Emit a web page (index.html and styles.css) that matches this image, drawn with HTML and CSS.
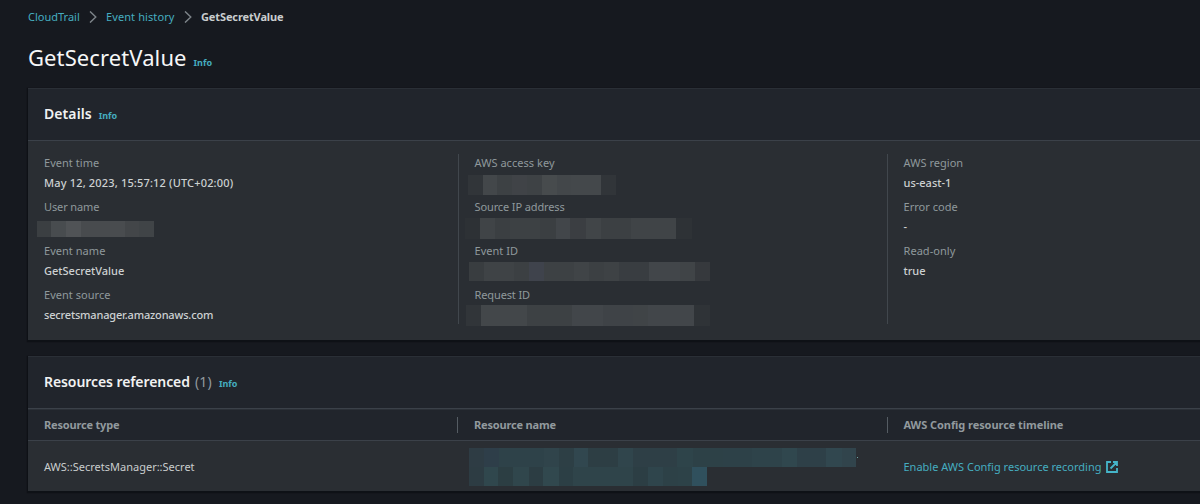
FILE: index.html
```html
<!DOCTYPE html>
<html lang="en">
<head>
<meta charset="utf-8">
<title>GetSecretValue</title>
<link rel="stylesheet" href="styles.css">
</head>
<body>
<main class="page">
  <nav class="crumbs">
    <a class="link crumb-root">CloudTrail</a>
    <svg class="chevron" viewBox="0 0 8 12"><path d="M1 .4 6.8 6 1 11.6"/></svg>
    <a class="link crumb-parent">Event history</a>
    <svg class="chevron" viewBox="0 0 8 12"><path d="M1 .4 6.8 6 1 11.6"/></svg>
    <span class="crumb-current">GetSecretValue</span>
  </nav>
  <header class="title"><h1>GetSecretValue</h1><a class="info">Info</a></header>

  <section class="panel details">
    <header class="panel-head"><h2>Details</h2><a class="info">Info</a></header>
    <div class="columns">
      <dl class="column">
        <dt>Event time</dt><dd class="date">May 12, 2023, 15:57:12 (UTC+02:00)</dd>
        <dt class="tight">User name</dt><dd><div class="mask mask-user"></div></dd>
        <dt>Event name</dt><dd>GetSecretValue</dd>
        <dt>Event source</dt><dd class="domain">secretsmanager.amazonaws.com</dd>
      </dl>
      <dl class="column">
        <dt>AWS access key</dt><dd><div class="mask mask-key"></div></dd>
        <dt class="tight">Source IP address</dt><dd><div class="mask mask-ip"></div></dd>
        <dt>Event ID</dt><dd><div class="mask mask-event"></div></dd>
        <dt class="tight">Request ID</dt><dd><div class="mask mask-request"></div></dd>
      </dl>
      <dl class="column">
        <dt>AWS region</dt><dd>us-east-1</dd>
        <dt>Error code</dt><dd>-</dd>
        <dt>Read-only</dt><dd>true</dd>
      </dl>
    </div>
  </section>

  <section class="panel resources">
    <header class="panel-head"><h2 class="long">Resources referenced</h2><span class="count">(1)</span><a class="info">Info</a></header>
    <div class="row head">
      <div class="cell">Resource type</div>
      <div class="cell">Resource name</div>
      <div class="cell timeline">AWS Config resource timeline</div>
    </div>
    <div class="row body">
      <div class="cell">AWS::SecretsManager::Secret</div>
      <div class="cell"><div class="name-mask"><div class="mask-line"><div class="mask mask-name-a"></div><i class="speck"></i></div><div class="mask mask-name-b"></div></div></div>
      <div class="cell"><a class="link">Enable AWS Config resource recording</a><svg class="external" viewBox="0 0 12 12"><path d="M5 1H1v10h10V7M7 1h4v4M11 1 4.5 7.5"/></svg></div>
    </div>
  </section>
</main>
</body>
</html>
```
FILE: styles.css
```css
* { box-sizing: border-box; }
body {
  margin: 0;
  height: 504px;
  overflow: hidden;
  background: #16191f;
  color: #c9cdce;
  font: 11px/20px "Noto Sans", "Open Sans", sans-serif;
}
.page { padding: 7px 0 0 28px; }
h1, h2, dl, dd { margin: 0; }
.link { color: #45adc0; }

.crumbs { display: flex; align-items: center; height: 20px; }
.crumb-root { width: 52px; }
.crumb-parent { width: 69px; letter-spacing: .1px; }
.crumb-current { font-weight: 700; letter-spacing: -.12px; }
.chevron {
  width: 8px;
  height: 12px;
  margin: 0 9px;
  fill: none;
  stroke: #7c8388;
  stroke-width: 1.4;
}

.title { display: flex; align-items: baseline; height: 61px; padding-top: 14px; }
h1 { font-size: 22px; line-height: 32px; font-weight: 400; color: #f6f7f7; letter-spacing: .1px; }
.info { margin-left: 7px; font-size: 9px; font-weight: 700; color: #45adc0; }

.panel { background: #2a2e33; box-shadow: 0 1px 1px 1px #0e1116; }
.panel-head {
  display: flex;
  align-items: baseline;
  height: 53px;
  padding: 15px 16px 0;
  border-top: 1px solid #2a2f36;
  border-bottom: 1px solid #3b4149;
  background: #21252c;
}
h2 { font-size: 14px; line-height: 20px; font-weight: 600; color: #f1f2f2; letter-spacing: .08px; }
.long { letter-spacing: -.08px; }
.count { margin-left: 5px; font-size: 14px; color: #92999e; letter-spacing: .2px; }

.details { height: 252px; }
.columns { display: grid; grid-template-columns: 430px 429px 1fr; padding-top: 13px; }
.column { height: 170px; padding-left: 16px; }
.column + .column { padding-left: 15.5px; border-left: 1px solid #41474d; }
.column dt:first-child { height: 19px; line-height: 18px; }
dt { height: 20px; color: #8f999c; letter-spacing: .04px; }
dd { height: 20px; margin-bottom: 4px; color: #cdd1d2; font-weight: 500; }
.tight { letter-spacing: -.12px; }
.date { letter-spacing: .17px; }
.domain { letter-spacing: -.18px; }

/* Pixelated redaction strips */
.mask-user {
  width: 117px; height: 16px; margin-left: -7px; transform: translateY(4px);
  background: linear-gradient(90deg, #3b3f42 14px, #484c4f 14px 29px, #505356 29px 44px, #484b4e 44px 73px, #494c4f 73px 88px, #434649 88px 102px, #404447 102px);
}
.mask-key {
  width: 148px; height: 20px; margin-left: -6.5px; transform: translateY(2px);
  background: linear-gradient(90deg, #313539 15px, #43474a 15px 29px, #3d4144 29px 44px, #404347 44px 59px, #3e4245 59px 74px, #474b4d 74px 89px, #43474a 89px 103px, #44484b 103px 133px, #313539 133px);
}
.mask-ip {
  width: 227px; height: 21px; margin-left: -9.5px; transform: translateY(1px);
  background: linear-gradient(90deg, #2d3135 15px, #404447 15px 30px, #3b3f42 30px 45px, #3d4144 45px 75px, #3b3f42 75px 91px, #42464a 91px 105px, #3b3e42 105px 121px, #414548 121px 136px, #3c4043 136px 166px, #404447 166px 211px, #2e3236 211px);
}
.mask-event {
  width: 241px; height: 19px; margin-left: -5.5px; transform: translateY(1px);
  background: linear-gradient(90deg, #393d40 15px, #3f4346 15px 45px, #3c4043 45px 60px, #3f434c 60px 75px, #3d4144 75px 105px, #404447 105px 120px, #3c4043 120px 135px, #3e4245 135px 150px, #393d41 150px 180px, #42464a 180px 211px, #404447 211px 226px, #36393d 226px);
}
.mask-request {
  width: 244px; height: 21px; margin-left: -8.5px;
  background: linear-gradient(90deg, #313539 15px, #43474a 15px 61px, #3d4144 61px 106px, #42464a 106px 137px, #3f4347 137px 167px, #404447 167px 182px, #42464a 182px 228px, #2f3337 228px);
}

.resources { height: 135px; margin-top: 16px; }
.row { display: grid; grid-template-columns: 429px 429.5px 1fr; align-items: center; height: 50px; }
.body { padding-top: 2px; }
.body .cell + .cell { padding-left: 17px; }
.cell { display: flex; align-items: center; padding-left: 16px; }
.head { height: 32px; background: #21252c; border-bottom: 1px solid #3b4149; border-top: 1px solid #2b3037; font-weight: 700; color: #929a9e; letter-spacing: -.18px; }
.head .cell { height: 16px; }
.head .timeline { letter-spacing: -.06px; }
.head .cell + .cell { border-left: 1px solid #555c63; }
.name-mask { margin-left: -5.5px; }
.mask-line { display: flex; align-items: center; gap: 1px; }
.mask-name-a {
  width: 387px; height: 19px;
  background: linear-gradient(90deg, #2e3c44 15px, #2e3e49 15px 30px, #2e4249 30px 75px, #30444b 75px 90px, #2d3f45 90px 105px, #31474f 105px 119px, #2d3e44 119px 149px, #30454c 149px 164px, #2e3f46 164px 208px, #2e444a 208px 224px, #2d4147 224px 254px, #2d4148 254px 283px, #2e434a 283px 313px, #30474e 313px 328px, #2e4048 328px 357px, #31474f 357px 373px, #31444c 373px);
}
.mask-name-b {
  width: 238px; height: 19px;
  background: linear-gradient(90deg, #2d3c43 15px, #30474d 15px 29px, #2c3e43 29px 44px, #30464c 44px 60px, #2c3d43 60px 74px, #31484e 74px 90px, #2c3f45 90px 104px, #2f444a 104px 164px, #2c3e44 164px 179px, #2f454c 179px 194px, #2d4147 194px 209px, #2d4248 209px 223px, #30505d 223px);
}
.speck { width: 1px; height: 1px; background: #6fa7a5; }
.external { width: 12px; height: 12px; margin-left: 4px; fill: none; stroke: #45b5c9; stroke-width: 1.8; }
```
